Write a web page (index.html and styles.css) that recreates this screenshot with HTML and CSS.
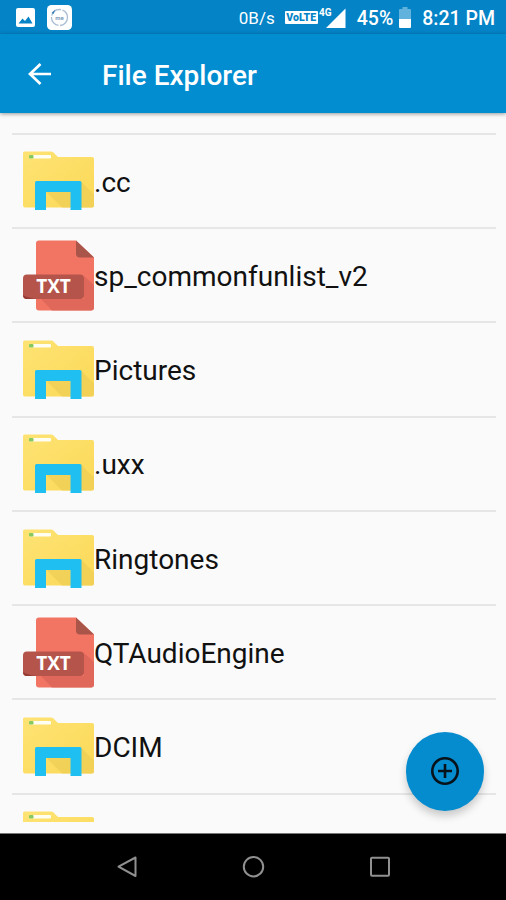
FILE: index.html
```html
<!DOCTYPE html>
<html lang="en">
<head>
<meta charset="utf-8">
<title>File Explorer</title>
<link rel="stylesheet" href="styles.css">
</head>
<body>
<div class="screen">
  <header class="status">
    <svg class="s-photo" viewBox="0 0 19 19"><rect width="19" height="19" rx="2" fill="#fff"/><path d="M2.500 15.500l4-5 2.500 2.500 3.500-4.500 4 7z" fill="#0483c6"/></svg>
    <svg class="s-app" viewBox="0 0 25 25"><rect width="25" height="25" rx="4.500" fill="#fff"/><circle cx="12.500" cy="12.500" r="8" fill="none" stroke="#a9bed3" stroke-width="1.300" stroke-dasharray="12 1.500"/><path d="M4.500 8l4-3.500-2 4.500z" fill="#317bb6"/><text x="12.500" y="14.500" class="app-label">me</text></svg>
    <span class="speed">0B/s</span>
    <span class="volte">VoLTE</span>
    <svg class="signal" viewBox="0 0 27 22"><text x="0" y="8.500" class="net-label">4G</text><path d="M26.500 1.500V21H7z" fill="#fff"/></svg>
    <span class="percent">45%</span>
    <svg class="battery" viewBox="0 0 12 21"><path d="M3.500 0h5v2H11q1 0 1 1v9H0V3q0-1 1-1h2.500z" fill="#61b3dd"/><path d="M0 12h12v8q0 1-1 1H1q-1 0-1-1z" fill="#fff"/></svg>
    <span class="time">8:21 PM</span>
  </header>
  <div class="appbar">
    <svg class="back" viewBox="0 0 24 22"><path d="M12.500 1L2 11l10.500 10M2 11h21" fill="none" stroke="#fff" stroke-width="2.700"/></svg>
    <h1>File Explorer</h1>
  </div>
  <main class="content">
    <ul class="files">
      <li><svg><use href="#folder"/></svg><span>.cc</span></li>
      <li><svg viewBox="0 0 71 71"><use href="#page"/><text x="30.500" y="53" class="txt-label">TXT</text></svg><span>sp_commonfunlist_v2</span></li>
      <li><svg><use href="#folder"/></svg><span>Pictures</span></li>
      <li><svg><use href="#folder"/></svg><span>.uxx</span></li>
      <li><svg><use href="#folder"/></svg><span>Ringtones</span></li>
      <li><svg viewBox="0 0 71 71"><use href="#page"/><text x="30.500" y="53" class="txt-label">TXT</text></svg><span>QTAudioEngine</span></li>
      <li><svg><use href="#folder"/></svg><span>DCIM</span></li>
      <li><svg><use href="#folder"/></svg></li>
    </ul>
    <button class="fab" aria-label="Add"><svg viewBox="0 0 30 30"><g fill="none" stroke="#07121a" stroke-width="2.600"><circle cx="15" cy="15" r="12.700"/><path d="M15 8v14M8 15h14"/></g></svg></button>
  </main>
  <nav class="navbar">
    <svg viewBox="0 0 24 24"><path d="M21.500 2.500v18.500L4.500 11.700z"/></svg>
    <svg viewBox="0 0 24 24"><circle cx="12.500" cy="11.700" r="9.700"/></svg>
    <svg viewBox="0 0 24 24"><rect x="3" y="2.700" width="18" height="18" rx="1"/></svg>
  </nav>
</div>
<svg class="defs" width="0" height="0" aria-hidden="true">
  <linearGradient id="paper" x1="0" y1="0" x2="1" y2="1"><stop offset="0" stop-color="#fee374"/><stop offset="1" stop-color="#fbd957"/></linearGradient>
  <symbol id="folder" viewBox="0 -0.500 71 71">
    <path fill="url(#paper)" d="M1.500 6H28q1.500 0 2.500 1l4.500 4.500H69q2 0 2 2V60q0 2-2 2H2q-2 0-2-2V7.500Q0 6 1.500 6z"/>
    <path fill="#efcd55" d="M58 36l13 13v11q0 2-2 2H58zM23 46l16 16h8.500V46z" opacity=".75"/>
    <rect x="6" y="9.500" width="22" height="3.500" rx="1" fill="#fffef2"/>
    <rect x="6" y="9.500" width="4.500" height="3.500" rx="1" fill="#86c95c"/>
    <path fill="#20bff1" d="M13.500 35.500H57q1.500 0 1.500 1.500v27.500H47.500v-18H23v18H12V37q0-1.500 1.500-1.500z"/>
  </symbol>
  <symbol id="page" viewBox="0 0 71 71">
    <path fill="#f27564" d="M16 .5H53L71 17.500v50q0 3-3 3H16q-3 0-3-3v-64q0-3 3-3z"/>
    <path fill="#dc6658" d="M61 36l10 9v22.500q0 3-3 3H29L18 59h43z" opacity=".85"/>
    <path fill="#a9554a" d="M53 .5L71 17.500H57q-4 0-4-4z"/>
    <rect x="0" y="34.500" width="61" height="24.500" rx="4" fill="#b4544a"/>
    <path fill="#963a33" d="M0 55q5 3 13 4H4q-4 0-4-4z"/>
  </symbol>
</svg>
</body>
</html>
```
FILE: styles.css
```css
* { box-sizing: border-box; }
body { margin: 0; font-family: Roboto, "Liberation Sans", sans-serif; }
.defs { position: absolute; }
.screen { width: 506px; height: 900px; display: flex; flex-direction: column; overflow: hidden; background: #fafafa; }
svg { display: block; flex: none; }

.status { height: 34px; flex: none; display: flex; align-items: center; padding: 1px 11px 0 16px; background: #0483c6; color: #fff; font-size: 19.500px; font-weight: 500; white-space: nowrap; }
.s-photo { width: 19px; height: 19px; }
.s-app { width: 25px; height: 25px; margin-left: 12px; }
.app-label { font: 700 6px Roboto, sans-serif; fill: #7e9bbb; text-anchor: middle; }
.speed { margin-left: auto; font-size: 17px; font-weight: 400; }
.volte { width: 33px; height: 13px; margin-left: 10px; background: #fff; color: #0483c6; border-radius: 1px; font-size: 10.500px; line-height: 13px; font-weight: 900; text-align: center; }
.signal { width: 27px; height: 22px; margin-left: 1px; }
.net-label { font: 700 10px Roboto, sans-serif; fill: #fff; }
.percent { margin-left: 11px; }
.speed, .percent, .time { padding-top: 1px; }
.battery { width: 12px; height: 21px; margin-left: 6px; }
.time { margin-left: 11px; }

.appbar { height: 79px; flex: none; display: flex; align-items: center; padding: 0 28px; background: #028dd0; color: #fff; box-shadow: 0 1px 4px rgba(0, 0, 0, .4); z-index: 1; }
.back { width: 24px; height: 22px; }
.appbar h1 { margin: 3px 0 0 50px; font-size: 28px; font-weight: 500; white-space: nowrap; }

.content { position: relative; flex: 1; min-height: 0; padding: 19.700px 10px 11px 12px; border-bottom: 1px solid #777; }
.files { height: 100%; margin: 0; padding: 0; list-style: none; overflow: hidden; }
.files li { height: 94.300px; display: flex; align-items: center; padding-left: 11px; border-top: 2px solid #e6e6e6; color: #111; font-size: 28px; }
.files svg { width: 71px; height: 71px; }
.files span { margin-top: 2.500px; white-space: nowrap; }
.txt-label { font: 700 19px "Open Sans", sans-serif; fill: #fff; text-anchor: middle; }

.fab { position: absolute; right: 22px; bottom: 22.500px; width: 78.500px; height: 78.500px; display: flex; align-items: center; justify-content: center; padding: 0; border: 0; border-radius: 50%; background: #058ccf; box-shadow: 0 5px 9px rgba(0, 0, 0, .2); }
.fab svg { width: 30px; height: 30px; }

.navbar { height: 66px; flex: none; display: flex; align-items: center; justify-content: space-between; padding: 0 114px; background: #000; }
.navbar svg { width: 24px; height: 24px; fill: none; stroke: #909090; stroke-width: 2; stroke-linejoin: round; }
```
